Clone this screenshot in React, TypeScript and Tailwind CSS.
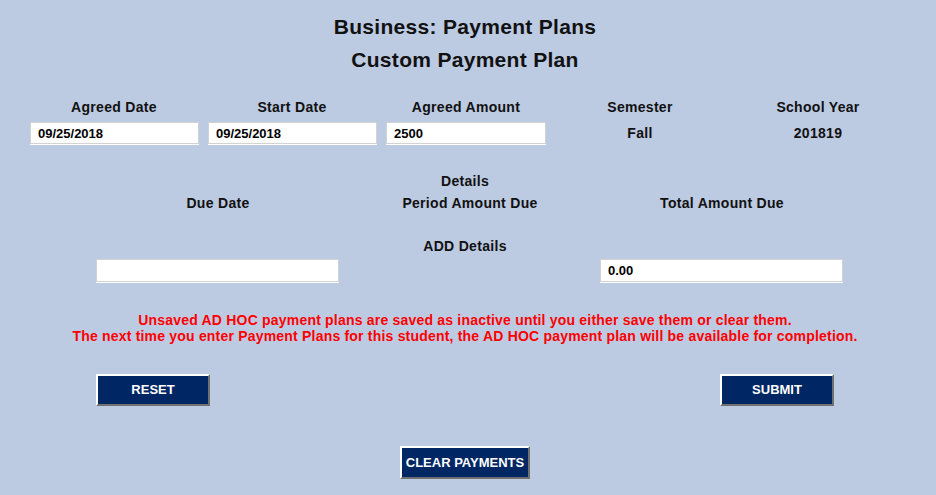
import { useState } from 'react';

const label = 'text-[14px] font-bold tracking-[0.3px] text-[#111] leading-[20px] text-center';
const field =
  'block w-full h-[22px] bg-white border border-[#d2d2d2] shadow-[0_1px_0_#ffffff] px-[7px] text-[13px] font-bold text-black outline-none';
const btn =
  'h-[32px] bg-[#002663] text-white text-[13px] font-bold border-t-[2px] border-l-[2px] border-t-white border-l-white border-b-[2px] border-r-[2px] border-b-[#707070] border-r-[#707070]';

export default function App() {
  const [agreedDate, setAgreedDate] = useState('09/25/2018');
  const [startDate, setStartDate] = useState('09/25/2018');
  const [amount, setAmount] = useState('2500');
  const [dueDate, setDueDate] = useState('');
  const [total, setTotal] = useState('0.00');

  return (
    <div
      className="min-h-screen w-[936px] bg-[#bccae2] pr-[6px] pt-[15px]"
      style={{ fontFamily: '"Liberation Sans", Arial, sans-serif' }}
    >
      <h1 className="text-center text-[21px] font-bold leading-[24px] tracking-[0.3px] text-[#111]">Business: Payment Plans</h1>
      <h2 className="mt-[9px] text-center text-[21px] font-bold leading-[24px] tracking-[0.3px] text-[#111]">Custom Payment Plan</h2>

      {/* plan header */}
      <div className="ml-[25px] mt-[25px] grid grid-cols-[178px_178px_170px_178px_178px]">
        <div className={label}>Agreed Date</div>
        <div className={label}>Start Date</div>
        <div className={label}>Agreed Amount</div>
        <div className={label}>Semester</div>
        <div className={label}>School Year</div>
      </div>
      <div className="ml-[25px] mt-[5px] grid grid-cols-[178px_178px_170px_178px_178px] items-center">
        <div className="pl-[5px] pr-[4px]">
          <input className={field} value={agreedDate} onChange={(e) => setAgreedDate(e.target.value)} />
        </div>
        <div className="pl-[5px] pr-[4px]">
          <input className={field} value={startDate} onChange={(e) => setStartDate(e.target.value)} />
        </div>
        <div className="pl-[5px] pr-[5px]">
          <input className={field} value={amount} onChange={(e) => setAmount(e.target.value)} />
        </div>
        <div className={label}>Fall</div>
        <div className={label}>201819</div>
      </div>

      {/* details */}
      <div className="mt-[29px] text-center text-[14px] font-bold leading-[16px] tracking-[0.3px] text-[#111]">Details</div>
      <div className="ml-[92px] mt-[6px] grid w-[756px] grid-cols-3 text-center text-[14px] font-bold leading-[16px] tracking-[0.3px] text-[#111]">
        <div>Due Date</div>
        <div>Period Amount Due</div>
        <div>Total Amount Due</div>
      </div>
      <div className="mt-[27px] text-center text-[14px] font-bold leading-[16px] tracking-[0.3px] text-[#111]">ADD Details</div>
      <div className="ml-[92px] mt-[5px] grid w-[756px] grid-cols-3">
        <div className="pl-[4px] pr-[5px]">
          <input className={`${field} h-[23px]`} value={dueDate} onChange={(e) => setDueDate(e.target.value)} />
        </div>
        <div />
        <div className="pl-[4px] pr-[5px]">
          <input className={`${field} h-[23px]`} value={total} onChange={(e) => setTotal(e.target.value)} />
        </div>
      </div>

      <div className="mt-[30px] text-center text-[14px] font-bold leading-[16px] tracking-[0.2px] text-[#ff0000]">
        <p>Unsaved AD HOC payment plans are saved as inactive until you either save them or clear them.</p>
        <p>The next time you enter Payment Plans for this student, the AD HOC payment plan will be available for completion.</p>
      </div>

      <div className="mt-[30px] flex pl-[96px] pr-[96px]">
        <button className={`${btn} w-[114px]`}>RESET</button>
        <button className={`${btn} ml-auto w-[114px]`}>SUBMIT</button>
      </div>

      <div className="mt-[40px] flex justify-center">
        <button className={`${btn} h-[33px] w-[130px]`}>CLEAR PAYMENTS</button>
      </div>
    </div>
  );
}
